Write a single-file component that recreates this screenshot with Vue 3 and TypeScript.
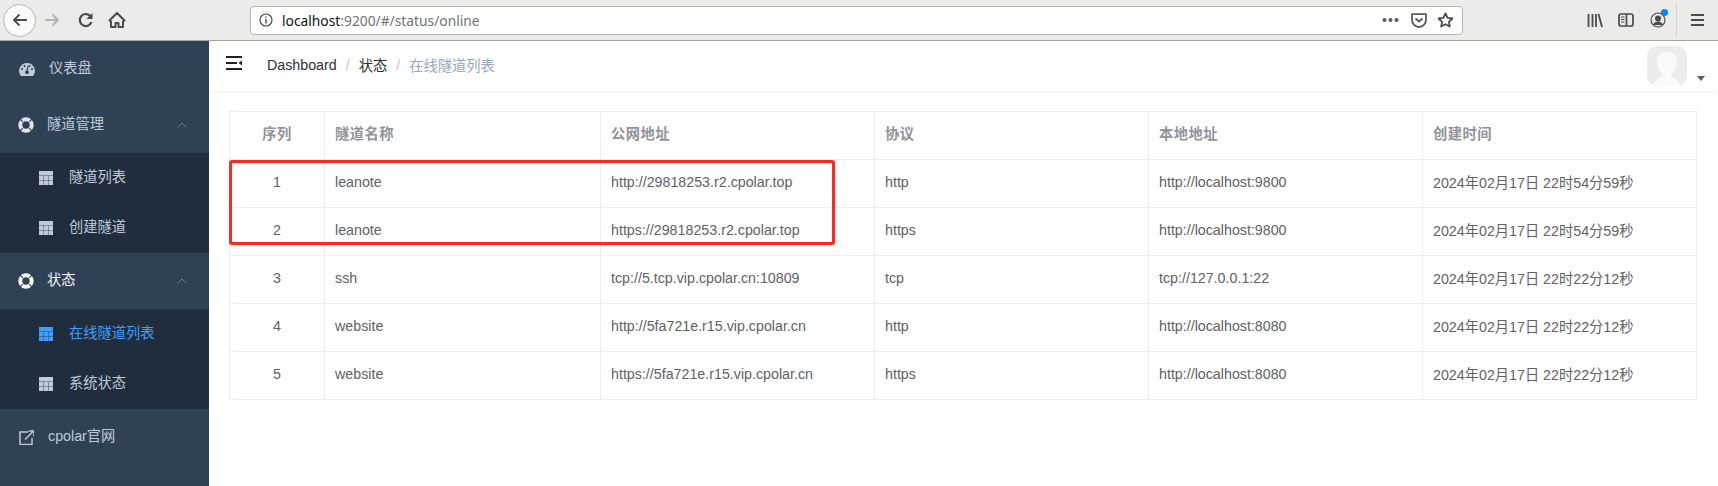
<template>
  <div class="page">
    <header class="browser">
      <button class="back">
        <svg width="18" height="18" viewBox="0 0 18 18"><path d="M16 9H3M8.500 3.500 3 9l5.500 5.500" fill="none" stroke="#4a4a4f" stroke-width="1.800" /></svg>
      </button>
      <svg class="forward" width="18" height="18" viewBox="0 0 18 18"><path d="M2 9h13M9.500 3.500 15 9l-5.500 5.500" fill="none" stroke="#b1b1b3" stroke-width="1.800" /></svg>
      <svg class="reload" width="18" height="18" viewBox="0 0 18 18"><path d="M14.500 11a6 6 0 1 1-.6-5.200" fill="none" stroke="#4a4a4f" stroke-width="2.200" /><path d="M15.500 2v6h-6z" fill="#4a4a4f" /></svg>
      <svg class="home" width="18" height="18" viewBox="0 0 18 18"><path d="M9 2 1.500 9.500 3 10.500V16h4.500v-4h3v4H15v-5.500l1.500-1L9 2z" fill="none" stroke="#4a4a4f" stroke-width="2" stroke-linejoin="round" /></svg>

      <div class="urlbar">
        <svg width="14" height="14" viewBox="0 0 14 14"><circle cx="7" cy="7" r="6" fill="none" stroke="#4a4a4f" stroke-width="1.200" /><path d="M7 6v4.500M7 3.500v1.300" stroke="#4a4a4f" stroke-width="1.400" /></svg>
        <span class="url"><b>localhost</b>:9200/#/status/online</span>
        <svg class="dots" width="17" height="4" viewBox="0 0 17 4"><circle cx="2.500" cy="2" r="2" /><circle cx="8.500" cy="2" r="2" /><circle cx="14.500" cy="2" r="2" /></svg>
        <svg class="pocket" width="16" height="15" viewBox="0 0 16 15"><path d="M1 1.200h14V7a7 7 0 0 1-14 0z" fill="none" stroke="#5b5b5f" stroke-width="1.800" stroke-linejoin="round" /><path d="m4.500 5.500 3.500 3 3.500-3" fill="none" stroke="#5b5b5f" stroke-width="1.800" /></svg>
        <svg class="star" width="17" height="16" viewBox="0 0 17 16"><path d="m8.500 1.500 2.100 4.300 4.800.7-3.500 3.300.9 4.700-4.300-2.300-4.300 2.300.9-4.700-3.500-3.300 4.800-.7z" fill="none" stroke="#4a4a4f" stroke-width="1.800" stroke-linejoin="round" /></svg>
      </div>

      <svg class="library" width="16" height="15" viewBox="0 0 16 15"><path d="M1.500 1v13M5.500 1v13M9 1v13M11.500 1l3.500 13" fill="none" stroke="#4a4a4f" stroke-width="1.800" /></svg>
      <svg class="panel" width="16" height="14" viewBox="0 0 16 14"><rect x="1" y="1" width="14" height="12" rx="2" fill="none" stroke="#4a4a4f" stroke-width="1.700" /><path d="M8.500 1v12" stroke="#4a4a4f" stroke-width="1.700" /><path d="M3 4h3.500M3 6.500h3.500M3 9h3.500" stroke="#4a4a4f" stroke-width="1" /></svg>
      <span class="account">
        <svg width="16" height="16" viewBox="0 0 16 16"><circle cx="8" cy="8" r="7" fill="none" stroke="#4a4a4f" stroke-width="1.200" /><circle cx="8" cy="6.500" r="3" fill="#4a4a4f" /><path d="M3 13c1-3 3-3.500 5-3.500s4 .5 5 3.500" fill="#4a4a4f" /></svg>
        <i class="account-dot"></i>
      </span>
      <span class="separator"></span>
      <svg class="menu" width="13" height="12" viewBox="0 0 13 12"><path d="M0 1h13M0 6h13M0 11h13" stroke="#4a4a4f" stroke-width="1.800" /></svg>
    </header>

    <div class="body">
      <aside class="sidebar">
        <template v-for="item in menu" :key="item.label">
          <div class="menu-item" :class="{ 'menu-item--open': item.children?.some((c) => c.active) }">
            <svg v-if="item.icon === 'gauge'" class="menu-icon gauge" width="16" height="13" viewBox="0 0 16 13"><path fill-rule="evenodd" d="M8 0a8 8 0 0 0-6.500 12.500l.5.500h12l.5-.5A8 8 0 0 0 8 0zM3 7a1 1 0 1 1 0-2 1 1 0 0 1 0 2zm2.500-3a1 1 0 1 1 0-2 1 1 0 0 1 0 2zm5 0a1 1 0 1 1 0-2 1 1 0 0 1 0 2zM13 7a1 1 0 1 1 0-2 1 1 0 0 1 0 2zM8 11a1.700 1.700 0 0 1-.7-3.300L8.500 3h1L8.700 7.700A1.700 1.700 0 0 1 8 11z" fill="currentColor" /></svg>
            <svg v-else-if="item.icon === 'ring'" class="menu-icon ring" width="16" height="16" viewBox="0 0 16 16"><circle cx="8" cy="8" r="5.700" fill="none" stroke="currentColor" stroke-width="4" /><path d="m2 2 2.800 2.800M14 2l-2.800 2.800M2 14l2.800-2.800M14 14l-2.800-2.800" stroke="#304156" stroke-width="1.100" /></svg>
            <svg v-else class="menu-icon link" width="15" height="15" viewBox="0 0 15 15"><path d="M9 2H1v12.500h12V8" fill="none" stroke="currentColor" stroke-width="1.500" /><path d="M6 9.500 14 1.500M9.500 1H15v5.500" fill="none" stroke="currentColor" stroke-width="1.500" /></svg>
            <span class="label">{{ item.label }}</span>
            <svg v-if="item.children" class="chevron" width="10" height="6" viewBox="0 0 10 6"><path d="m.5 5.500 4.500-4.500 4.500 4.500" fill="none" stroke="#6f7e90" stroke-width="1" /></svg>
          </div>
          <div v-if="item.children" class="submenu">
            <div
              v-for="child in item.children"
              :key="child.label"
              class="submenu-item"
              :class="{ 'submenu-item--active': child.active }"
            >
              <svg class="grid-icon" width="14" height="14" viewBox="0 0 14 14"><rect width="14" height="14" fill="currentColor" /><path d="M0 4.500h14M0 9.500h14M4.500 4.500V14M9.500 4.500V14" stroke="#1f2d3d" stroke-width=".7" stroke-opacity=".55" /></svg>
              <span class="label">{{ child.label }}</span>
            </div>
          </div>
        </template>
      </aside>

      <main class="main">
        <div class="navbar">
          <svg class="fold" width="16" height="14" viewBox="0 0 16 14"><path d="M0 1h16M0 13h16M0 7h11" stroke="#222" stroke-width="1.800" /><path d="M16 4.500v5L12.500 7z" fill="#222" /></svg>
          <nav class="crumbs">
            <span>Dashboard</span><i>/</i><span>状态</span><i>/</i><span class="crumb-current">在线隧道列表</span>
          </nav>
          <div class="avatar">
            <svg width="40" height="40" viewBox="0 0 40 40"><rect width="40" height="40" rx="10" fill="#ececec" /><path d="M6 40c0-4 4-6 9-9 1-1 1-3 0-4-3-3-5-7-5-12 0-6 4-9 10-9s10 3 10 9c0 5-2 9-5 12-1 1-1 3 0 4 5 3 9 5 9 9z" fill="#fafafa" /></svg>
            <i class="avatar-caret"></i>
          </div>
        </div>

        <section class="content">
          <div class="table-wrap">
            <table class="tunnels">
              <colgroup>
                <col v-for="w in colWidths" :key="w.name" :style="{ width: w.width + 'px' }" />
              </colgroup>
              <thead>
                <tr>
                  <th class="center">序列</th>
                  <th>隧道名称</th>
                  <th>公网地址</th>
                  <th>协议</th>
                  <th>本地地址</th>
                  <th>创建时间</th>
                </tr>
              </thead>
              <tbody>
                <tr v-for="(row, i) in rows" :key="i">
                  <td class="center">{{ i + 1 }}</td>
                  <td>{{ row.name }}</td>
                  <td>{{ row.url }}</td>
                  <td>{{ row.proto }}</td>
                  <td>{{ row.local }}</td>
                  <td>{{ row.created }}</td>
                </tr>
              </tbody>
            </table>
            <div class="highlight"></div>
          </div>
        </section>
      </main>
    </div>
  </div>
</template>

<script setup lang="ts">
interface MenuChild {
  label: string
  active?: boolean
}

interface MenuItem {
  label: string
  icon: 'gauge' | 'ring' | 'link'
  children?: MenuChild[]
}

interface Tunnel {
  name: string
  url: string
  proto: string
  local: string
  created: string
}

const menu: MenuItem[] = [
  { label: '仪表盘', icon: 'gauge' },
  {
    label: '隧道管理',
    icon: 'ring',
    children: [{ label: '隧道列表' }, { label: '创建隧道' }]
  },
  {
    label: '状态',
    icon: 'ring',
    children: [{ label: '在线隧道列表', active: true }, { label: '系统状态' }]
  },
  { label: 'cpolar官网', icon: 'link' }
]

const colWidths = [
  { name: 'index', width: 95 },
  { name: 'name', width: 276 },
  { name: 'url', width: 274 },
  { name: 'proto', width: 274 },
  { name: 'local', width: 274 },
  { name: 'created', width: 274 }
]

const rows: Tunnel[] = [
  { name: 'leanote', url: 'http://29818253.r2.cpolar.top', proto: 'http', local: 'http://localhost:9800', created: '2024年02月17日 22时54分59秒' },
  { name: 'leanote', url: 'https://29818253.r2.cpolar.top', proto: 'https', local: 'http://localhost:9800', created: '2024年02月17日 22时54分59秒' },
  { name: 'ssh', url: 'tcp://5.tcp.vip.cpolar.cn:10809', proto: 'tcp', local: 'tcp://127.0.0.1:22', created: '2024年02月17日 22时22分12秒' },
  { name: 'website', url: 'http://5fa721e.r15.vip.cpolar.cn', proto: 'http', local: 'http://localhost:8080', created: '2024年02月17日 22时22分12秒' },
  { name: 'website', url: 'https://5fa721e.r15.vip.cpolar.cn', proto: 'https', local: 'http://localhost:8080', created: '2024年02月17日 22时22分12秒' }
]
</script>

<style>
html,
body {
  margin: 0;
  overflow: hidden;
}
</style>

<style scoped>
.page {
  width: 1718px;
  height: 486px;
  display: flex;
  flex-direction: column;
  font-family: "Liberation Sans", "Noto Sans CJK SC", sans-serif;
  font-size: 14.25px;
}

.browser {
  flex: none;
  height: 41px;
  box-sizing: border-box;
  display: flex;
  align-items: center;
  background: #ebebe9;
  border-bottom: 1px solid #a9a9a7;
}

.back {
  width: 33px;
  height: 33px;
  margin-left: 3px;
  padding: 0;
  border: 1px solid #b4b4b4;
  border-radius: 50%;
  background: #fbfbfb;
  display: flex;
  align-items: center;
  justify-content: center;
}

.forward {
  margin-left: 7px;
}

.reload {
  margin-left: 16px;
}

.home {
  margin-left: 13px;
}

.urlbar {
  width: 1213px;
  height: 29px;
  margin-left: 124px;
  box-sizing: border-box;
  display: flex;
  align-items: center;
  padding-left: 8px;
  background: #fff;
  border: 1px solid #b5b5b3;
  border-radius: 4px;
  color: #737373;
  font-family: "Noto Sans", "Noto Sans CJK SC", sans-serif;
  font-size: 13.8px;
}

.url {
  margin-left: 9px;
}

.url b {
  font-weight: 400;
  color: #111;
}

.dots {
  margin-left: auto;
  fill: #5b5b5f;
}

.pocket {
  margin-left: 12px;
}

.star {
  margin-left: 10px;
  margin-right: 8px;
}

.library {
  margin-left: 124px;
}

.panel {
  margin-left: 15px;
}

.account {
  position: relative;
  display: flex;
  margin-left: 16px;
}

.account-dot {
  position: absolute;
  top: -3px;
  right: -2px;
  width: 7px;
  height: 7px;
  border-radius: 50%;
  background: #0a84ff;
}

.separator {
  width: 1px;
  height: 34px;
  margin-left: 10px;
  background: #d2d2d0;
}

.menu {
  margin-left: 14px;
}

.body {
  flex: 1;
  display: flex;
  min-height: 0;
}

.sidebar {
  flex: none;
  width: 209px;
  background: #304156;
  color: #bfcbd9;
}

.label {
  padding-bottom: 5px;
}

.menu-item {
  height: 56px;
  display: flex;
  align-items: center;
  padding-left: 19px;
}

.menu-item--open {
  color: #f4f4f5;
}

.menu-icon {
  flex: none;
}

.gauge {
  margin-right: 14px;
}

.ring {
  margin-left: -1px;
  margin-right: 13px;
  color: #dfe5ec;
}

.menu-item--open .ring {
  color: #fff;
}

.link {
  margin-right: 14px;
}

.chevron {
  margin-left: auto;
  margin-right: 22px;
}

.submenu {
  background: #1f2d3d;
}

.submenu-item {
  height: 50px;
  display: flex;
  align-items: center;
  gap: 16px;
  padding-left: 39px;
}

.submenu-item--active {
  color: #409eff;
}

.main {
  flex: 1;
  min-width: 0;
  background: #fff;
}

.navbar {
  height: 50px;
  display: flex;
  align-items: center;
  padding-left: 17px;
  box-shadow: 0 1px 4px rgba(0, 21, 41, 0.08);
  position: relative;
}

.fold {
  flex: none;
  margin-top: -6px;
}

.crumbs {
  margin-left: 25px;
  padding-bottom: 3px;
  color: #303133;
  display: flex;
  align-items: center;
}

.crumbs i {
  margin: 0 9px;
  font-style: normal;
  color: #c0c4cc;
}

.crumb-current {
  color: #97a8be;
}

.avatar {
  margin-left: auto;
  margin-right: 31px;
  position: relative;
  width: 40px;
  height: 40px;
}

.avatar svg {
  display: block;
}

.avatar-caret {
  position: absolute;
  right: -18px;
  top: 30px;
  border: 4px solid transparent;
  border-top: 5px solid #5a5e66;
  border-bottom: 0;
}

.content {
  padding: 20px;
}

.table-wrap {
  position: relative;
}

.tunnels {
  width: 1468px;
  table-layout: fixed;
  border-collapse: separate;
  border-spacing: 0;
  border-top: 1px solid #ebeef5;
  border-left: 1px solid #ebeef5;
  color: #606266;
}

.tunnels th,
.tunnels td {
  height: 48px;
  box-sizing: border-box;
  padding: 0 10px 4px;
  text-align: left;
  border-right: 1px solid #ebeef5;
  border-bottom: 1px solid #ebeef5;
}

.tunnels th {
  padding-bottom: 6px;
  color: #909399;
  font-weight: 700;
  letter-spacing: 0.5px;
}

.tunnels .center {
  text-align: center;
}

.highlight {
  position: absolute;
  left: 0;
  top: 49px;
  width: 606px;
  height: 85px;
  box-sizing: border-box;
  border: 3px solid #fa2a22;
  border-radius: 3px;
}
</style>
